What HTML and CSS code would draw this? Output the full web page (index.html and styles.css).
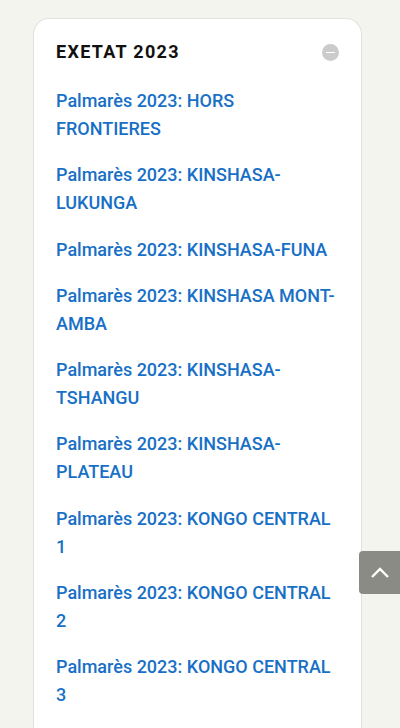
FILE: index.html
```html
<!DOCTYPE html>
<html lang="fr">

<head>
    <meta charset="UTF-8">
    <meta name="viewport" content="width=device-width, initial-scale=1.0">
    <title>EXETAT 2023</title>
    <link rel="stylesheet" href="styles.css">
</head>

<body>

    <div class="widget">
        <div class="widget-head">
            <h3>EXETAT 2023</h3>
            <span class="toggle"></span>
        </div>
        <ul class="links">
            <li><a href="#">Palmarès 2023: HORS FRONTIERES</a></li>
            <li><a href="#">Palmarès 2023: KINSHASA-LUKUNGA</a></li>
            <li><a href="#">Palmarès 2023: KINSHASA-FUNA</a></li>
            <li><a href="#">Palmarès 2023: KINSHASA MONT-AMBA</a></li>
            <li><a href="#">Palmarès 2023: KINSHASA-TSHANGU</a></li>
            <li><a href="#">Palmarès 2023: KINSHASA-PLATEAU</a></li>
            <li><a href="#">Palmarès 2023: KONGO CENTRAL 1</a></li>
            <li><a href="#">Palmarès 2023: KONGO CENTRAL 2</a></li>
            <li><a href="#">Palmarès 2023: KONGO CENTRAL 3</a></li>
        </ul>
    </div>

    <a href="#" class="to-top">
        <svg width="20" height="12" viewBox="0 0 20 12">
            <path d="M2 10 L10 2 L18 10" fill="none" stroke="#fff" stroke-width="2.4"/>
        </svg>
    </a>

</body>

</html>
```

FILE: styles.css
```css
body {
    font-family: 'Roboto', 'Liberation Sans', sans-serif;
    background-color: #f3f4ee;
    margin: 0;
    padding: 18px 38px 0 33px;
    height: 728px;
    box-sizing: border-box;
    overflow: hidden;
}

.widget {
    background-color: #fff;
    border: 1px solid #e2e2de;
    border-bottom: none;
    border-radius: 16px 16px 0 0;
    padding: 20px 25px 0 22px;
    height: 100%;
    box-sizing: border-box;
    overflow: hidden;
}

.widget-head {
    display: flex;
    align-items: center;
    justify-content: space-between;
    margin-bottom: 22px;
}

h3 {
    margin: 0;
    font-size: 18px;
    font-weight: 700;
    letter-spacing: 1.3px;
    color: #111;
    line-height: 26px;
}

.toggle {
    position: relative;
    width: 17px;
    height: 17px;
    margin-right: -3px;
    border-radius: 50%;
    background-color: #cbcbcb;
}

.toggle::after {
    content: "";
    position: absolute;
    left: 4px;
    right: 4px;
    top: 8px;
    height: 1px;
    background-color: #fff;
}

.links {
    list-style: none;
    margin: 0;
    padding: 0;
}

.links li {
    margin-bottom: 18.25px;
}

.links a {
    color: #1870c6;
    text-decoration: none;
    font-size: 18px;
    font-weight: 500;
    line-height: 28px;
}

.to-top {
    position: fixed;
    right: 0;
    top: 551px;
    width: 41px;
    height: 43px;
    background-color: #8a8b84;
    border-radius: 4px 0 0 4px;
    display: flex;
    align-items: center;
    justify-content: center;
}
```
